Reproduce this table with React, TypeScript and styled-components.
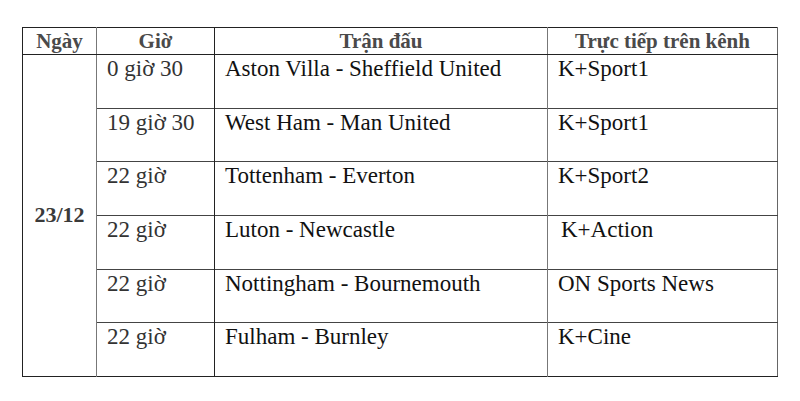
import styled, { createGlobalStyle } from 'styled-components'

const GlobalStyle = createGlobalStyle`
  html, body { margin: 0; padding: 0; background: #fff; }
  body { font-family: "Liberation Serif", "Times New Roman", serif; color: #111; }
`

const Page = styled.div`
  width: 800px;
  height: 401px;
  padding: 27px 0 0 22px;
  box-sizing: border-box;
`

const Table = styled.table`
  border-collapse: collapse;
  table-layout: fixed;
  width: 755px;
  border: 1px solid #222;
  border-right-color: #666;
  font-family: "Liberation Serif", "Times New Roman", serif;
`

const HeadCell = styled.th<{ $soft?: boolean }>`
  height: 26px;
  padding: 0;
  font-family: "Liberation Serif", "Times New Roman", serif;
  font-size: 21px;
  font-weight: 700;
  color: #4a4a4a;
  text-align: center;
  vertical-align: middle;
  line-height: 26px;
  border-bottom: 1px solid #222;
  border-left: 1px solid ${p => (p.$soft ? '#777' : '#222')};
`

const DateCell = styled.td`
  padding: 0;
  font-family: "Liberation Serif", "Times New Roman", serif;
  font-size: 22px;
  font-weight: 700;
  color: #3a3a3a;
  text-align: center;
  vertical-align: middle;
`

const Cell = styled.td<{ $soft?: boolean; $lead?: boolean; $dim?: boolean }>`
  height: 51.67px;
  padding: 1px 0 0 ${p => (p.$lead ? '13px' : '10px')};
  font-family: "Liberation Serif", "Times New Roman", serif;
  font-size: 23px;
  line-height: 26px;
  color: ${p => (p.$dim ? '#333' : '#111')};
  vertical-align: top;
  white-space: nowrap;
  border-top: 1px solid #444;
  border-left: 1px solid ${p => (p.$soft ? '#777' : '#222')};
`

type Match = { time: string; game: string; channel: string; lead?: boolean }

const matches: Match[] = [
  { time: '0 giờ 30', game: 'Aston Villa - Sheffield United', channel: 'K+Sport1' },
  { time: '19 giờ 30', game: 'West Ham - Man United', channel: 'K+Sport1' },
  { time: '22 giờ', game: 'Tottenham - Everton', channel: 'K+Sport2' },
  { time: '22 giờ', game: 'Luton - Newcastle', channel: 'K+Action', lead: true },
  { time: '22 giờ', game: 'Nottingham - Bournemouth', channel: 'ON Sports News' },
  { time: '22 giờ', game: 'Fulham - Burnley', channel: 'K+Cine' },
]

export default function App() {
  return (
    <Page>
      <GlobalStyle />
      <Table>
        <colgroup>
          <col style={{ width: 74 }} />
          <col style={{ width: 118 }} />
          <col style={{ width: 333 }} />
          <col style={{ width: 230 }} />
        </colgroup>
        <thead>
          <tr>
            <HeadCell>Ngày</HeadCell>
            <HeadCell $soft>Giờ</HeadCell>
            <HeadCell>Trận đấu</HeadCell>
            <HeadCell $soft>Trực tiếp trên kênh</HeadCell>
          </tr>
        </thead>
        <tbody>
          {matches.map((m, i) => (
            <tr key={i}>
              {i === 0 && <DateCell rowSpan={matches.length}>23/12</DateCell>}
              <Cell $soft $dim>{m.time}</Cell>
              <Cell>{m.game}</Cell>
              <Cell $soft $lead={m.lead}>{m.channel}</Cell>
            </tr>
          ))}
        </tbody>
      </Table>
    </Page>
  )
}
